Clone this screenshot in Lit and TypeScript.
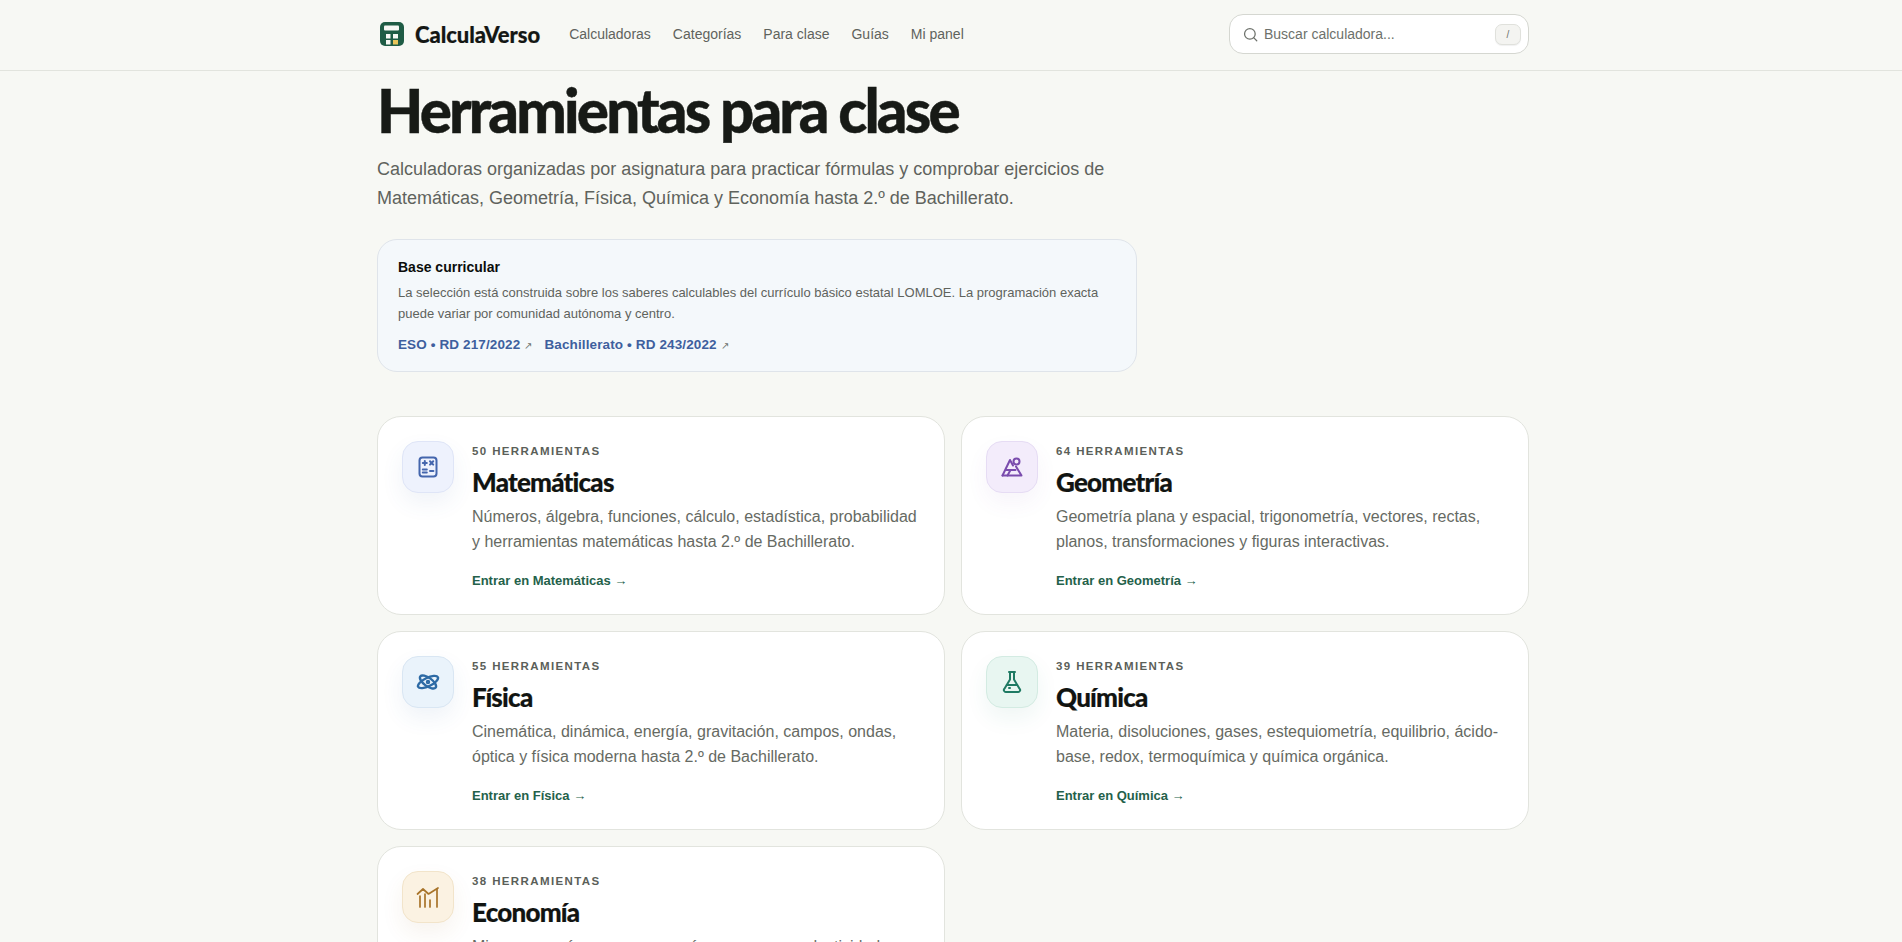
import { LitElement, html, css, svg } from "lit";
import { customElement } from "lit/decorators.js";

type Subject = { count: number; name: string; desc: string; tone: string; icon: unknown };

const subjects: Subject[] = [
  {
    count: 50, name: "Matemáticas", tone: "math",
    desc: "Números, álgebra, funciones, cálculo, estadística, probabilidad y herramientas matemáticas hasta 2.º de Bachillerato.",
    icon: svg`<rect x="3.5" y="2.5" width="17" height="19" rx="3"/><path d="M6.8 8h4M8.8 6v4M14 6.2l3.2 3.4M17.2 6.2L14 9.6M6.8 14.5h4M6.8 17.5h4M14 16h3.4"/>`,
  },
  {
    count: 64, name: "Geometría", tone: "geo",
    desc: "Geometría plana y espacial, trigonometría, vectores, rectas, planos, transformaciones y figuras interactivas.",
    icon: svg`<path d="M2.5 20.5L10 5l3 5.5"/><path d="M2.5 20.5h19l-5.5-9"/><path d="M6.5 15h9M7.5 20.5l3-5.5"/><circle cx="16.5" cy="6.5" r="3"/>`,
  },
  {
    count: 55, name: "Física", tone: "phys",
    desc: "Cinemática, dinámica, energía, gravitación, campos, ondas, óptica y física moderna hasta 2.º de Bachillerato.",
    icon: svg`<ellipse cx="12" cy="12" rx="11" ry="4.2" transform="rotate(-26 12 12)"/><ellipse cx="12" cy="12" rx="9.5" ry="4.2" transform="rotate(36 12 12)"/><circle cx="12" cy="12" r="1"/>`,
  },
  {
    count: 39, name: "Química", tone: "chem",
    desc: "Materia, disoluciones, gases, estequiometría, equilibrio, ácido-base, redox, termoquímica y química orgánica.",
    icon: svg`<path d="M9 2h6M10 2v7.5l-5.4 9A2 2 0 0 0 6.3 22h11.4a2 2 0 0 0 1.7-3.5L14 9.5V2"/><path d="M6.8 15h10.4"/><path d="M9 18h1"/>`,
  },
  {
    count: 38, name: "Economía", tone: "econ",
    desc: "Microeconomía, macroeconomía, empresa, productividad, inversión y finanzas personales hasta 2.º de Bachillerato.",
    icon: svg`<path d="M1.5 9L7 4l5.5 5L22 3"/><path d="M4 22V11M9 22V9M14 22v-7M21 22V4"/>`,
  },
];

@customElement("app-root")
export class AppRoot extends LitElement {
  static styles = css`
    :host {
      display: block;
      min-height: 942px;
      background: #f7f8f4;
      color: #171a16;
      font-family: "Liberation Sans", Arial, sans-serif;
    }
    a { color: inherit; text-decoration: none; }
    .bar {
      height: 70px;
      border-bottom: 1px solid #e2e4de;
    }
    .wrap { width: 1152px; margin-left: 377px; }
    .bar .wrap {
      height: 100%;
      box-sizing: border-box;
      padding-bottom: 2px;
      display: flex;
      align-items: center;
    }
    .brand {
      display: flex;
      align-items: center;
      gap: 11px;
      padding-left: 3px;
      font: 900 22px/1 Lato, sans-serif;
      letter-spacing: -0.003em;
      -webkit-text-stroke: 0.2px currentColor;
      color: #141714;
    }
    .brand span { margin-top: 2px; }
    .nav {
      display: flex;
      gap: 22px;
      margin-left: 29px;
      font-size: 14px;
      color: #5f635d;
    }
    .search {
      margin-left: auto;
      width: 300px;
      height: 40px;
      box-sizing: border-box;
      border: 1px solid #d5d7d1;
      border-radius: 14px;
      background: #fff;
      display: flex;
      align-items: center;
      padding: 0 7px 0 13px;
      gap: 6px;
      font-size: 14px;
      color: #6d716b;
    }
    .search svg { width: 15px; height: 15px; fill: none; stroke: #6d716b; stroke-width: 2; stroke-linecap: round; }
    .kbd {
      margin-left: auto;
      width: 26px;
      height: 21px;
      box-sizing: border-box;
      border: 1px solid #e0e1dc;
      border-radius: 7px;
      background: #f4f4f1;
      font-size: 10px;
      display: flex;
      align-items: center;
      justify-content: center;
      box-shadow: 0 1px 1px rgba(0, 0, 0, 0.06);
    }
    h1 {
      margin: 3px 0 0;
      font: 900 60px/72px Lato, sans-serif;
      letter-spacing: -2.8px;
      -webkit-text-stroke: 0.4px currentColor;
      color: #171a16;
    }
    .lead {
      margin: 9px 0 0;
      max-width: 760px;
      font-size: 18px;
      line-height: 29px;
      color: #5f635d;
    }
    .base {
      margin-top: 26px;
      width: 760px;
      box-sizing: border-box;
      padding: 19px 20px 16px;
      border: 1px solid #dfe4ea;
      border-radius: 20px;
      background: #f4f8fb;
    }
    .base h2 { margin: 0; font-size: 14px; line-height: 17px; font-weight: 700; color: #0b0d0b; }
    .base p { margin: 6px 0 0; font-size: 13px; line-height: 21px; color: #5f635d; }
    .links { display: flex; gap: 12px; margin-top: 12px; font-size: 13.5px; line-height: 18px; font-weight: 700; letter-spacing: 0.12px; color: #3e5f9e; }
    .links i { font-style: normal; font-weight: 400; font-size: 10px; color: #6d716b; margin-left: 4px; }
    .grid {
      margin-top: 44px;
      display: grid;
      grid-template-columns: 1fr 1fr;
      gap: 16px;
    }
    .card {
      box-sizing: border-box;
      height: 199px;
      display: flex;
      gap: 18px;
      padding: 24px;
      background: #fff;
      border: 1px solid #e2e4de;
      border-radius: 24px;
    }
    .ico {
      flex: none;
      width: 52px;
      height: 52px;
      box-sizing: border-box;
      border: 1px solid;
      border-radius: 16px;
      display: flex;
      align-items: center;
      justify-content: center;
    }
    .ico svg { width: 24px; height: 24px; fill: none; stroke: currentColor; stroke-width: 2; stroke-linecap: round; stroke-linejoin: round; }
    .math { background: #eef2fd; border-color: #dfe5f7; color: #4466ad; box-shadow: 0 10px 22px rgba(63, 98, 168, 0.08); }
    .geo { background: #f3ecfb; border-color: #e6dcf4; color: #7a4cad; box-shadow: 0 10px 22px rgba(115, 69, 168, 0.06); }
    .phys { background: #eaf3fb; border-color: #d9e6f3; color: #2d6aa5; box-shadow: 0 10px 22px rgba(45, 106, 165, 0.08); }
    .phys svg { stroke-width: 2.4; }
    .chem { background: #e8f6f1; border-color: #d3ebe2; color: #1f7a63; box-shadow: 0 10px 22px rgba(31, 122, 99, 0.07); }
    .econ { background: #fbf2e2; border-color: #f2e4ca; color: #a8742a; box-shadow: 0 10px 22px rgba(154, 106, 32, 0.08); }
    .econ svg { stroke-width: 1.7; }
    .eyebrow { font-size: 11.5px; line-height: 14px; font-weight: 700; letter-spacing: 0.12em; color: #5b5f59; margin-top: 3px; }
    h3 { margin: 9px 0 0; font: 900 26px/30px Lato, sans-serif; letter-spacing: -0.03em; -webkit-text-stroke: 0.2px currentColor; color: #111411; }
    .desc { margin: 7px 0 0; font-size: 16px; line-height: 25px; color: #666a63; }
    .cta { display: block; margin-top: 18px; font-size: 13px; line-height: 18px; font-weight: 700; color: #24614a; }
  `;

  render() {
    return html`
      <header class="bar">
        <div class="wrap">
          <a class="brand">
            <svg width="24" height="24" viewBox="0 0 24 24">
              <rect width="24" height="24" rx="5" fill="#1f5c45"/>
              <rect x="4" y="3.5" width="15" height="5" rx="1" fill="#f7f8f4"/>
              <rect x="6" y="12" width="4.5" height="4.5" fill="#f7f8f4"/>
              <rect x="13" y="12" width="5" height="4.5" fill="#f7f8f4"/>
              <rect x="6" y="18" width="4.5" height="4.5" fill="#f7f8f4"/>
              <rect x="13" y="18" width="5" height="4.5" fill="#e8c65a"/>
            </svg>
            <span>CalculaVerso</span>
          </a>
          <nav class="nav">
            <a>Calculadoras</a><a>Categorías</a><a>Para clase</a><a>Guías</a><a>Mi panel</a>
          </nav>
          <div class="search">
            <svg viewBox="0 0 24 24"><circle cx="11" cy="11" r="8.5"/><path d="M22 22l-5-5"/></svg>
            <span>Buscar calculadora...</span>
            <span class="kbd">/</span>
          </div>
        </div>
      </header>
      <main class="wrap">
        <h1>Herramientas para clase</h1>
        <p class="lead">Calculadoras organizadas por asignatura para practicar fórmulas y comprobar ejercicios de Matemáticas, Geometría, Física, Química y Economía hasta 2.º de Bachillerato.</p>
        <section class="base">
          <h2>Base curricular</h2>
          <p>La selección está construida sobre los saberes calculables del currículo básico estatal LOMLOE. La programación exacta puede variar por comunidad autónoma y centro.</p>
          <div class="links">
            <a>ESO • RD 217/2022<i>↗</i></a>
            <a>Bachillerato • RD 243/2022<i>↗</i></a>
          </div>
        </section>
        <section class="grid">
          ${subjects.map(
            (s) => html`
              <article class="card">
                <div class="ico ${s.tone}"><svg viewBox="0 0 24 24">${s.icon}</svg></div>
                <div>
                  <div class="eyebrow">${s.count} HERRAMIENTAS</div>
                  <h3>${s.name}</h3>
                  <p class="desc">${s.desc}</p>
                  <a class="cta">Entrar en ${s.name} →</a>
                </div>
              </article>
            `
          )}
        </section>
      </main>
    `;
  }
}
